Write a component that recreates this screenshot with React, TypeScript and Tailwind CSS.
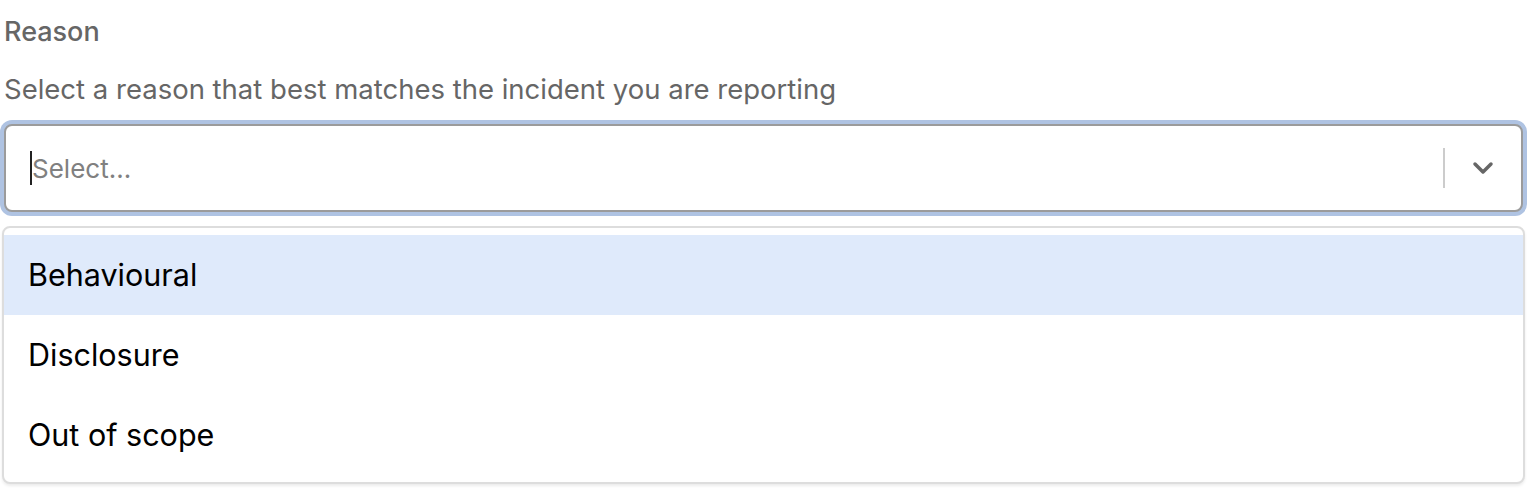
const OPTIONS = ["Behavioural", "Disclosure", "Out of scope"];

export default function App() {
  return (
    <div className="h-[488px] w-[1527px] overflow-hidden bg-white font-['Inter','Liberation_Sans',sans-serif]">
      <div className="pt-[17px]">
        <label className="block pl-[4px] text-[27px] font-medium leading-[30px] text-[#666]">
          Reason
        </label>
        <p className="mt-[27px] pl-[4px] text-[27.5px] leading-[30px] text-[#666]">
          Select a reason that best matches the incident you are reporting
        </p>

        <div className="mt-[16px] rounded-[12px] bg-[#afc3e2] p-[4px]">
          <div className="flex h-[88px] items-center rounded-[8px] border-2 border-[#9b9b9b] bg-white">
            <div className="flex flex-1 items-center pl-[24px]">
              <span className="h-[34px] w-[2px] bg-[#222]" />
              <span className="text-[26px] text-[#808080]">Select...</span>
            </div>
            <span className="h-[40px] w-[2px] bg-[#ccc]" />
            <div className="flex w-[76px] items-center justify-center">
              <svg width="22" height="14" viewBox="0 0 22 14" fill="none">
                <path d="M3 3l8 8 8-8" stroke="#666" strokeWidth="3.5" strokeLinecap="round" strokeLinejoin="round" />
              </svg>
            </div>
          </div>
        </div>

        <div className="mx-[2px] mt-[10px] rounded-[8px] border-2 border-[#ddd] bg-white py-[7px] shadow-[0_2px_3px_rgba(0,0,0,0.08)]">
          {OPTIONS.map((opt, i) => (
            <div
              key={opt}
              className={`flex h-[80px] items-center pl-[24px] text-[30.5px] text-black ${i === 0 ? "bg-[#dfeafb]" : ""}`}
            >
              {opt}
            </div>
          ))}
        </div>
      </div>
    </div>
  );
}
